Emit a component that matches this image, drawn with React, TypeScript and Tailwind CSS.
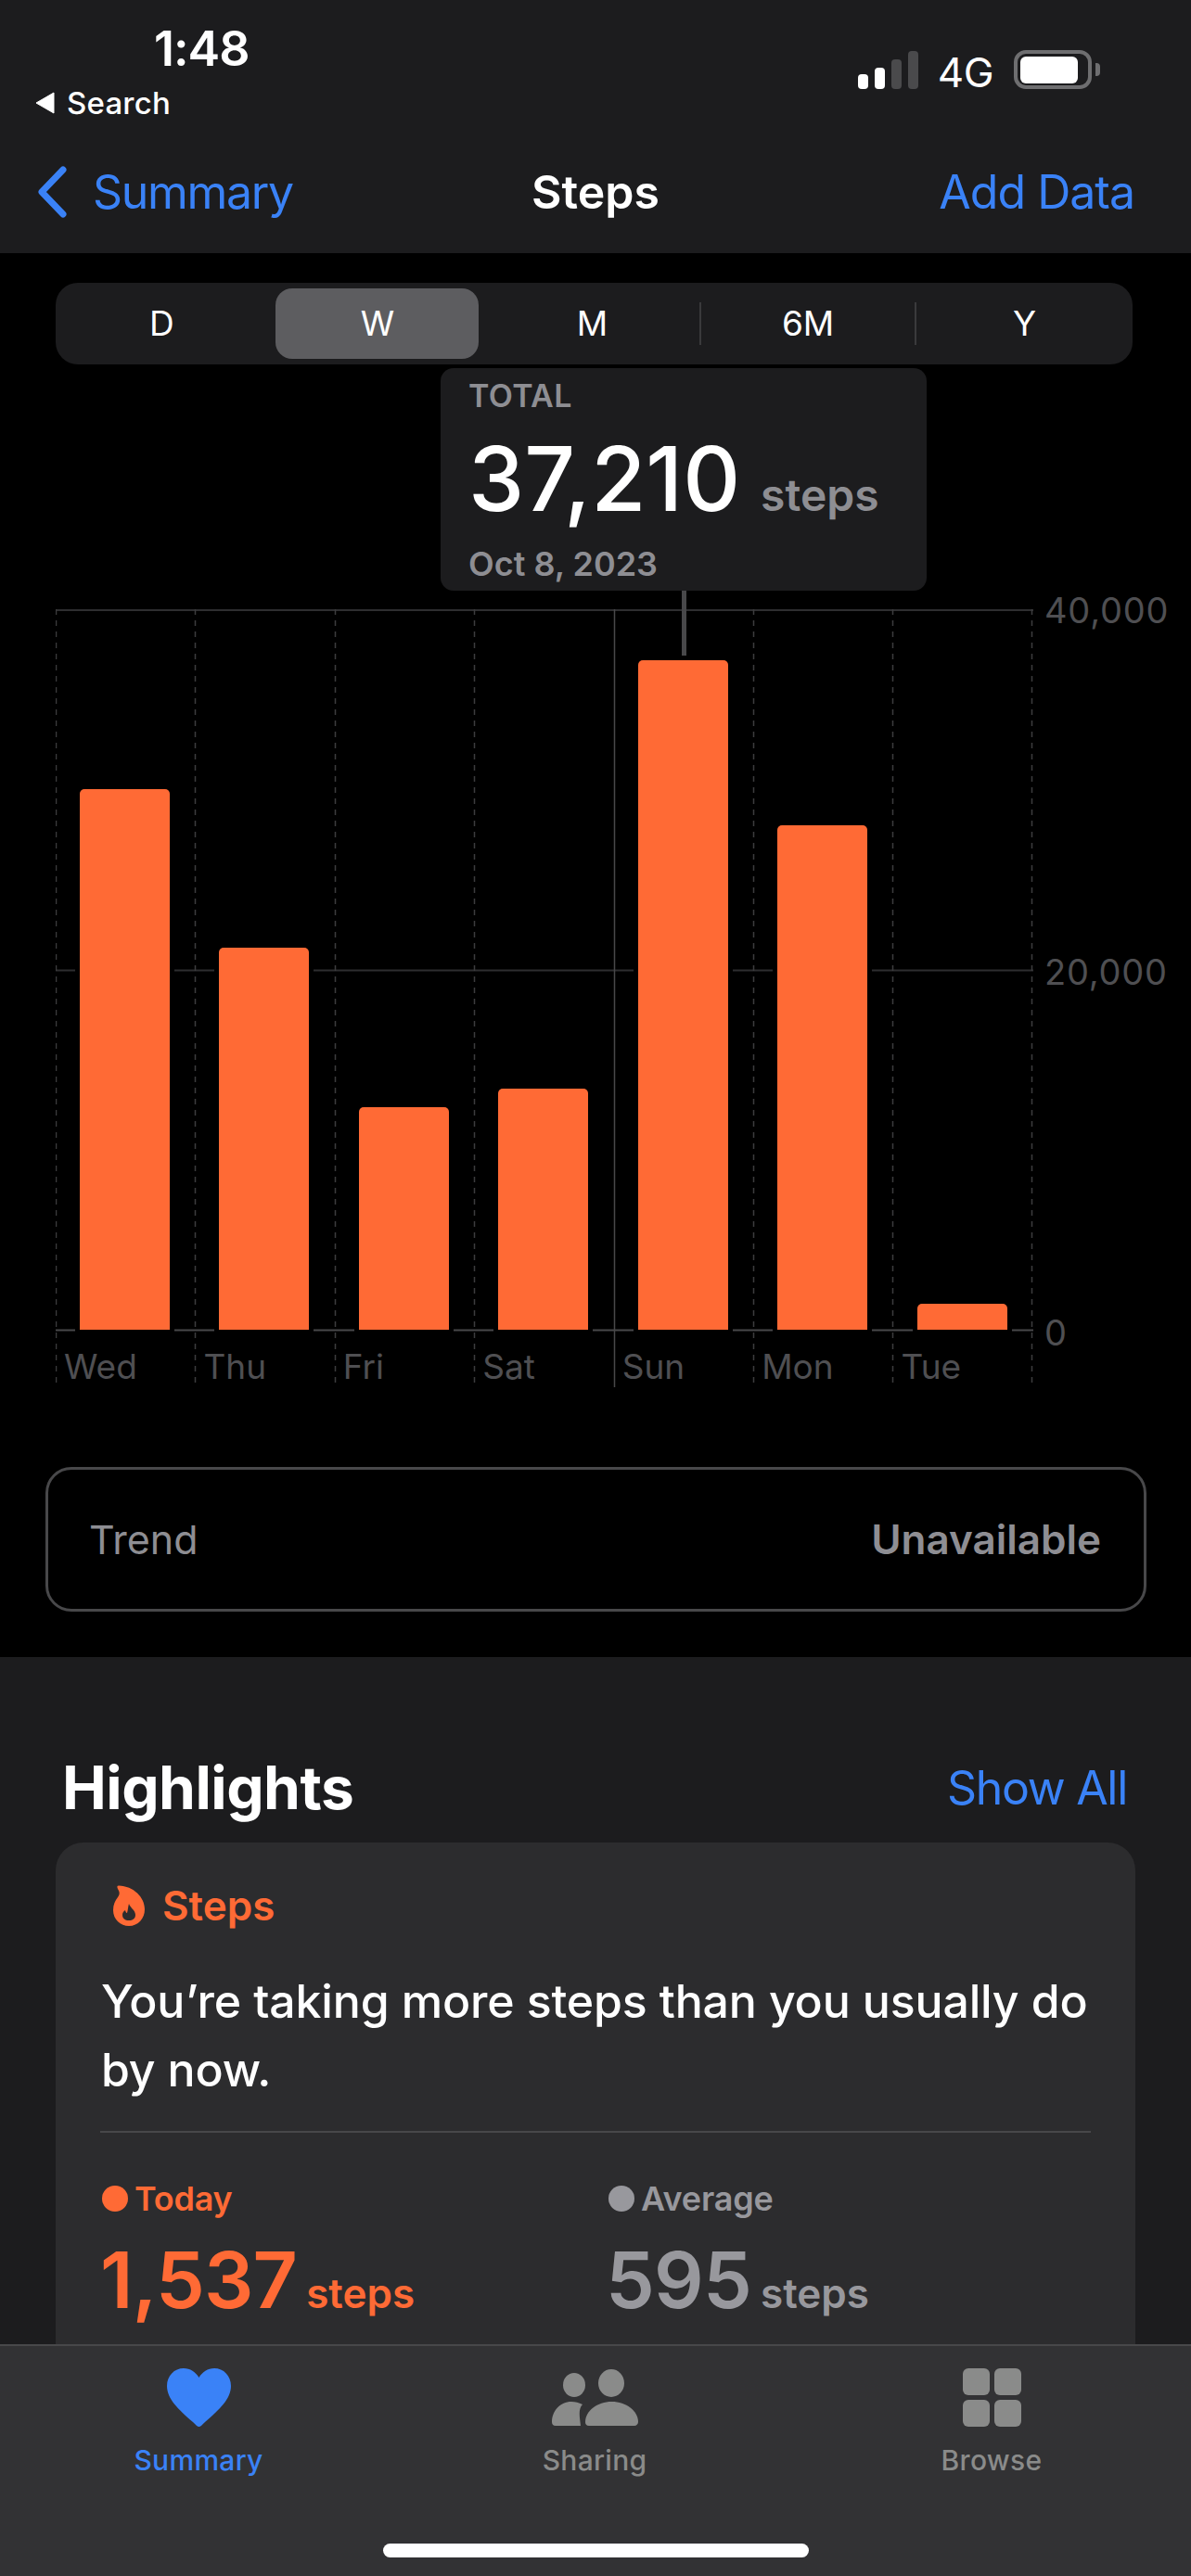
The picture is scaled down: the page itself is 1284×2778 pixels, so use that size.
import { ReactNode } from "react";

const days = [
  { label: "Wed", top: 851 },
  { label: "Thu", top: 1022 },
  { label: "Fri", top: 1194 },
  { label: "Sat", top: 1174 },
  { label: "Sun", top: 712 },
  { label: "Mon", top: 890 },
  { label: "Tue", top: 1406 },
];

const AXIS_Y = 1434;

function StatusBar() {
  return (
    <div className="flex h-[150px] justify-between">
      <div className="flex flex-col pt-[26px]">
        <div className="ml-[166px] text-[52px] font-semibold leading-[54px] tracking-[-1px] text-white">1:48</div>
        <div className="ml-[38px] mt-[11px] flex items-center gap-[13px]">
          <svg width="21" height="24" viewBox="0 0 21 24">
            <path d="M20 1 L20 23 L1 12 Z" fill="#fff" stroke="#fff" strokeLinejoin="round" />
          </svg>
          <span className="text-[33px] font-medium leading-[40px] tracking-[0.2px] text-white">Search</span>
        </div>
      </div>
      <div className="mr-[98px] mt-[54px] flex h-[42px] items-end">
        <div className="flex items-end gap-[7px]">
          <div className="h-[16px] w-[11px] rounded-[4px] bg-white" />
          <div className="h-[23px] w-[11px] rounded-[4px] bg-white" />
          <div className="h-[32px] w-[11px] rounded-[4px] bg-[#4a4a4c]" />
          <div className="h-[41px] w-[11px] rounded-[4px] bg-[#4a4a4c]" />
        </div>
        <span className="ml-[21px] text-[44px] font-normal leading-[36px] tracking-[-0.5px] text-white">4G</span>
        <div className="ml-[22px] flex h-[42px] w-[84px] items-center rounded-[13px] border-[4px] border-[#6e6e70] pl-[3px]">
          <div className="h-[29px] w-[62px] rounded-[6px] bg-white" />
        </div>
        <div className="mb-[14px] ml-[4px] h-[14px] w-[5px] rounded-r-[4px] bg-[#6e6e70]" />
      </div>
    </div>
  );
}

function NavBar() {
  return (
    <div className="grid h-[114px] grid-cols-[1fr_auto_1fr] items-center px-[40px] text-[50px] leading-[60px]">
      <div className="flex items-center gap-[28px] text-[#3a82f7]">
        <svg width="32" height="56" viewBox="0 0 32 56" fill="none">
          <path d="M28 4 L5 28 L28 52" stroke="#3a82f7" strokeWidth="7" strokeLinecap="round" strokeLinejoin="round" />
        </svg>
        <span className="tracking-[-1.3px]">Summary</span>
      </div>
      <div className="font-semibold text-white">Steps</div>
      <div className="pr-[21px] text-right tracking-[-1px] text-[#3a82f7]">Add Data</div>
    </div>
  );
}

function Segments() {
  const items = ["D", "W", "M", "6M", "Y"];
  return (
    <div className="ml-[60px] mt-[32px] h-[88px] w-[1161px] rounded-[24px] bg-[#1c1c1e]">
      <div className="ml-[-2px] grid h-full grid-cols-[repeat(5,232.6px)] items-center">
        {items.map((item, i) => (
          <div key={item} className="flex h-full items-center">
            <div className="flex flex-1 justify-center">
              <div
                className={
                  i === 1
                    ? "flex h-[76px] w-[219px] items-center justify-center rounded-[18px] bg-[#5d5d60] text-[37px] text-white"
                    : "flex h-[76px] w-[219px] items-center justify-center text-[37px] text-white"
                }
              >
                {item}
              </div>
            </div>
            {i >= 2 && i < 4 && <div className="h-[46px] w-[2px] bg-[#3a3a3c]" />}
          </div>
        ))}
      </div>
    </div>
  );
}

function GridLines() {
  const xs = [0, 150, 301, 451, 602, 752, 902, 1052];
  return (
    <svg className="absolute left-0 top-0" width="1054" height="840" viewBox="0 0 1054 840">
      <line x1="0" y1="1" x2="1054" y2="1" stroke="#2e2e30" strokeWidth="2" />
      <line x1="0" y1="389.5" x2="1054" y2="389.5" stroke="#2e2e30" strokeWidth="2" />
      <line x1="0" y1="777.5" x2="1054" y2="777.5" stroke="#48484a" strokeWidth="2" />
      {xs.map((x, i) =>
        i === 4 ? (
          <line key={x} x1={x + 0.5} y1="0" x2={x + 0.5} y2="839" stroke="#48484a" strokeWidth="1.5" />
        ) : (
          <line key={x} x1={x + 0.5} y1="0" x2={x + 0.5} y2="839" stroke="#3c3c3e" strokeWidth="1.5" strokeDasharray="6 6" />
        ),
      )}
    </svg>
  );
}

function Chart() {
  return (
    <div className="ml-[60px] mt-[264px] flex">
      <div className="relative h-[839px] w-[1053px]">
        <GridLines />
        <div className="relative grid h-full grid-cols-7">
          {days.map((d) => (
            <div key={d.label} className="flex flex-col">
              <div className="flex h-[777px] items-end pl-[26px]">
                <div
                  className="w-[97px] rounded-t-[5px] bg-[#ff6a35] ring-[5px] ring-black"
                  style={{ height: AXIS_Y - d.top }}
                />
              </div>
              <div className="relative pl-[9px] pt-[18px] text-[37px] leading-[44px] text-[#4f4f52]">{d.label}</div>
            </div>
          ))}
        </div>
      </div>
      <div className="ml-[13px] mt-[-21px] flex h-[823px] flex-col justify-between text-[38px] leading-[44px] tracking-[0.8px] text-[#4f4f52]">
        <div>40,000</div>
        <div>20,000</div>
        <div>0</div>
      </div>
    </div>
  );
}

function Tooltip() {
  return (
    <>
      <div className="absolute left-[735px] top-[364px] h-[70px] w-[5px] bg-[#48484a]" />
      <div className="absolute left-[475px] top-[124px] h-[240px] w-[524px] rounded-[14px] bg-[#1c1c1e] pl-[30px]">
        <div className="pt-[12px] text-[34px] font-semibold leading-[36px] tracking-[0.4px] text-[#8e8e93]">TOTAL</div>
        <div className="mt-[21px] flex items-baseline">
          <span className="text-[96px] font-medium leading-[100px] text-white">37,210</span>
          <span className="ml-[22px] text-[48px] font-semibold leading-[56px] text-[#8e8e93]">steps</span>
        </div>
        <div className="mt-[22px] text-[36px] font-semibold leading-[40px] text-[#8e8e93]">Oct 8, 2023</div>
      </div>
    </>
  );
}

function Stat({
  color,
  label,
  value,
  className,
  valueClass,
}: {
  color: string;
  label: string;
  value: string;
  className: string;
  valueClass: string;
}) {
  return (
    <div className={className}>
      <div className={`flex h-[36px] items-center gap-[7px] text-[36px] font-semibold tracking-[-0.2px] ${color}`}>
        <span className="h-[28px] w-[28px] rounded-full bg-current" />
        <span>{label}</span>
      </div>
      <div className={`mt-[22px] flex items-baseline gap-[10px] font-semibold ${color}`}>
        <span className={`text-[84px] leading-[96px] tracking-[-0.8px] ${valueClass}`}>{value}</span>
        <span className="text-[44px] leading-[56px]">steps</span>
      </div>
    </div>
  );
}

function Highlights() {
  return (
    <div className="min-h-0 flex-1 overflow-hidden bg-[#1c1c1e]">
      <div className="flex h-[200px] items-start justify-between pl-[67px] pr-[69px] pt-[105px]">
        <div className="text-[64px] font-bold leading-[72px] tracking-[-0.5px] text-white">Highlights</div>
        <div className="pt-[6px] text-[50px] leading-[60px] tracking-[-1.3px] text-[#3a82f7]">Show All</div>
      </div>
      <div className="mx-[60px] h-[800px] rounded-[30px] bg-[#2c2c2e] px-[48px]">
        <div className="flex h-[136px] items-center gap-[19px] pl-[14px] text-[#ff6a35]">
          <svg width="34" height="44" viewBox="0 0 34 44">
            <path
              fillRule="evenodd"
              fill="#ff6a35"
              d="M6 0.5C4 0.5 4 2 5 4C7.5 8 7 10 5 13C2 17 0 21 0 27C0 37 8 44 17 44C27 44 34 36 34 26C34 13 22 1 6 0.5Z M17 20C18 24 24 27 24 32C24 36 21 38 17 38C13 38 10 36 10 32C10 30 11 28 13 27C13.5 29 14 30 15 30C16 27 16 23 17 20Z"
            />
          </svg>
          <span className="text-[44px] font-semibold leading-[50px]">Steps</span>
        </div>
        <div className="mt-[-2px] pl-[1px] text-[50px] font-medium leading-[74px] tracking-[-0.15px] text-white">
          You’re taking more steps than you usually do by now.
        </div>
        <div className="mt-[29px] h-[2px] bg-[#48484a]" />
        <div className="mt-[53px] flex pl-[2px]">
          <Stat className="w-[546px]" color="text-[#ff6a35]" label="Today" value="1,537" valueClass="ml-[-2px]" />
          <Stat className="flex-1" color="text-[#98989d]" label="Average" value="595" valueClass="ml-[-3px]" />
        </div>
      </div>
    </div>
  );
}

function TabItem({ icon, label, color }: { icon: ReactNode; label: string; color: string }) {
  return (
    <div className={`flex flex-col items-center ${color}`}>
      <div className="flex h-[63px] items-center">{icon}</div>
      <div className="mt-[18px] text-[30px] font-medium leading-[36px] tracking-[0.3px]">{label}</div>
    </div>
  );
}

function TabBar() {
  return (
    <div className="flex h-[250px] shrink-0 flex-col border-t-2 border-[#48484a] bg-[#323234] pt-[24px]">
      <div className="grid grid-cols-[428px_426px_430px]">
        <TabItem
          label="Summary"
          color="text-[#3a82f7]"
          icon={
            <svg width="69" height="63" viewBox="0 0 69 63" fill="currentColor">
              <path d="M34.5 63C33 63 31 61 28 58C12 44 0 33 0 19C0 8 8 0 18 0C25 0 31 4 34.5 10C38 4 44 0 51 0C61 0 69 8 69 19C69 33 57 44 41 58C38 61 36 63 34.5 63Z" />
            </svg>
          }
        />
        <TabItem
          label="Sharing"
          color="text-[#8a8b8a]"
          icon={
            <svg width="94" height="61" viewBox="0 0 94 61" fill="currentColor">
              <ellipse cx="25" cy="17" rx="12" ry="13" />
              <ellipse cx="65" cy="15" rx="14" ry="15" />
              <path d="M5 61C2 61 1 59 1 57C1 45 10 35 22 35C26 35 30 36 34 38C29 43 31 52 32 61Z" />
              <path d="M41 61C38 61 37 59 37 57C37 45 50 35 65.5 35C81 35 94 45 94 57C94 59 92 61 90 61Z" />
            </svg>
          }
        />
        <TabItem
          label="Browse"
          color="text-[#8a8b8a]"
          icon={
            <svg width="63" height="63" viewBox="0 0 63 63" fill="currentColor">
              <rect x="0" y="0" width="29" height="29" rx="6" />
              <rect x="34" y="0" width="29" height="29" rx="6" />
              <rect x="0" y="34" width="29" height="29" rx="6" />
              <rect x="34" y="34" width="29" height="29" rx="6" />
            </svg>
          }
        />
      </div>
      <div className="mx-auto mt-[72px] h-[15px] w-[459px] rounded-full bg-white" />
    </div>
  );
}

export default function App() {
  return (
    <div className="flex h-[2778px] w-[1284px] flex-col overflow-hidden bg-black font-['Inter',sans-serif]">
      <div className="h-[273px] shrink-0 bg-[#1c1c1e]">
        <StatusBar />
        <NavBar />
      </div>
      <div className="relative h-[1514px] shrink-0 bg-black">
        <Segments />
        <Chart />
        <Tooltip />
        <div className="ml-[49px] mt-[86px] flex h-[156px] w-[1187px] items-center justify-between rounded-[28px] border-[3px] border-[#48484a] pl-[44px] pr-[46px] text-[43px] text-[#8e8e93]">
          <span>Trend</span>
          <span className="text-[44px] font-semibold">Unavailable</span>
        </div>
      </div>
      <Highlights />
      <TabBar />
    </div>
  );
}
